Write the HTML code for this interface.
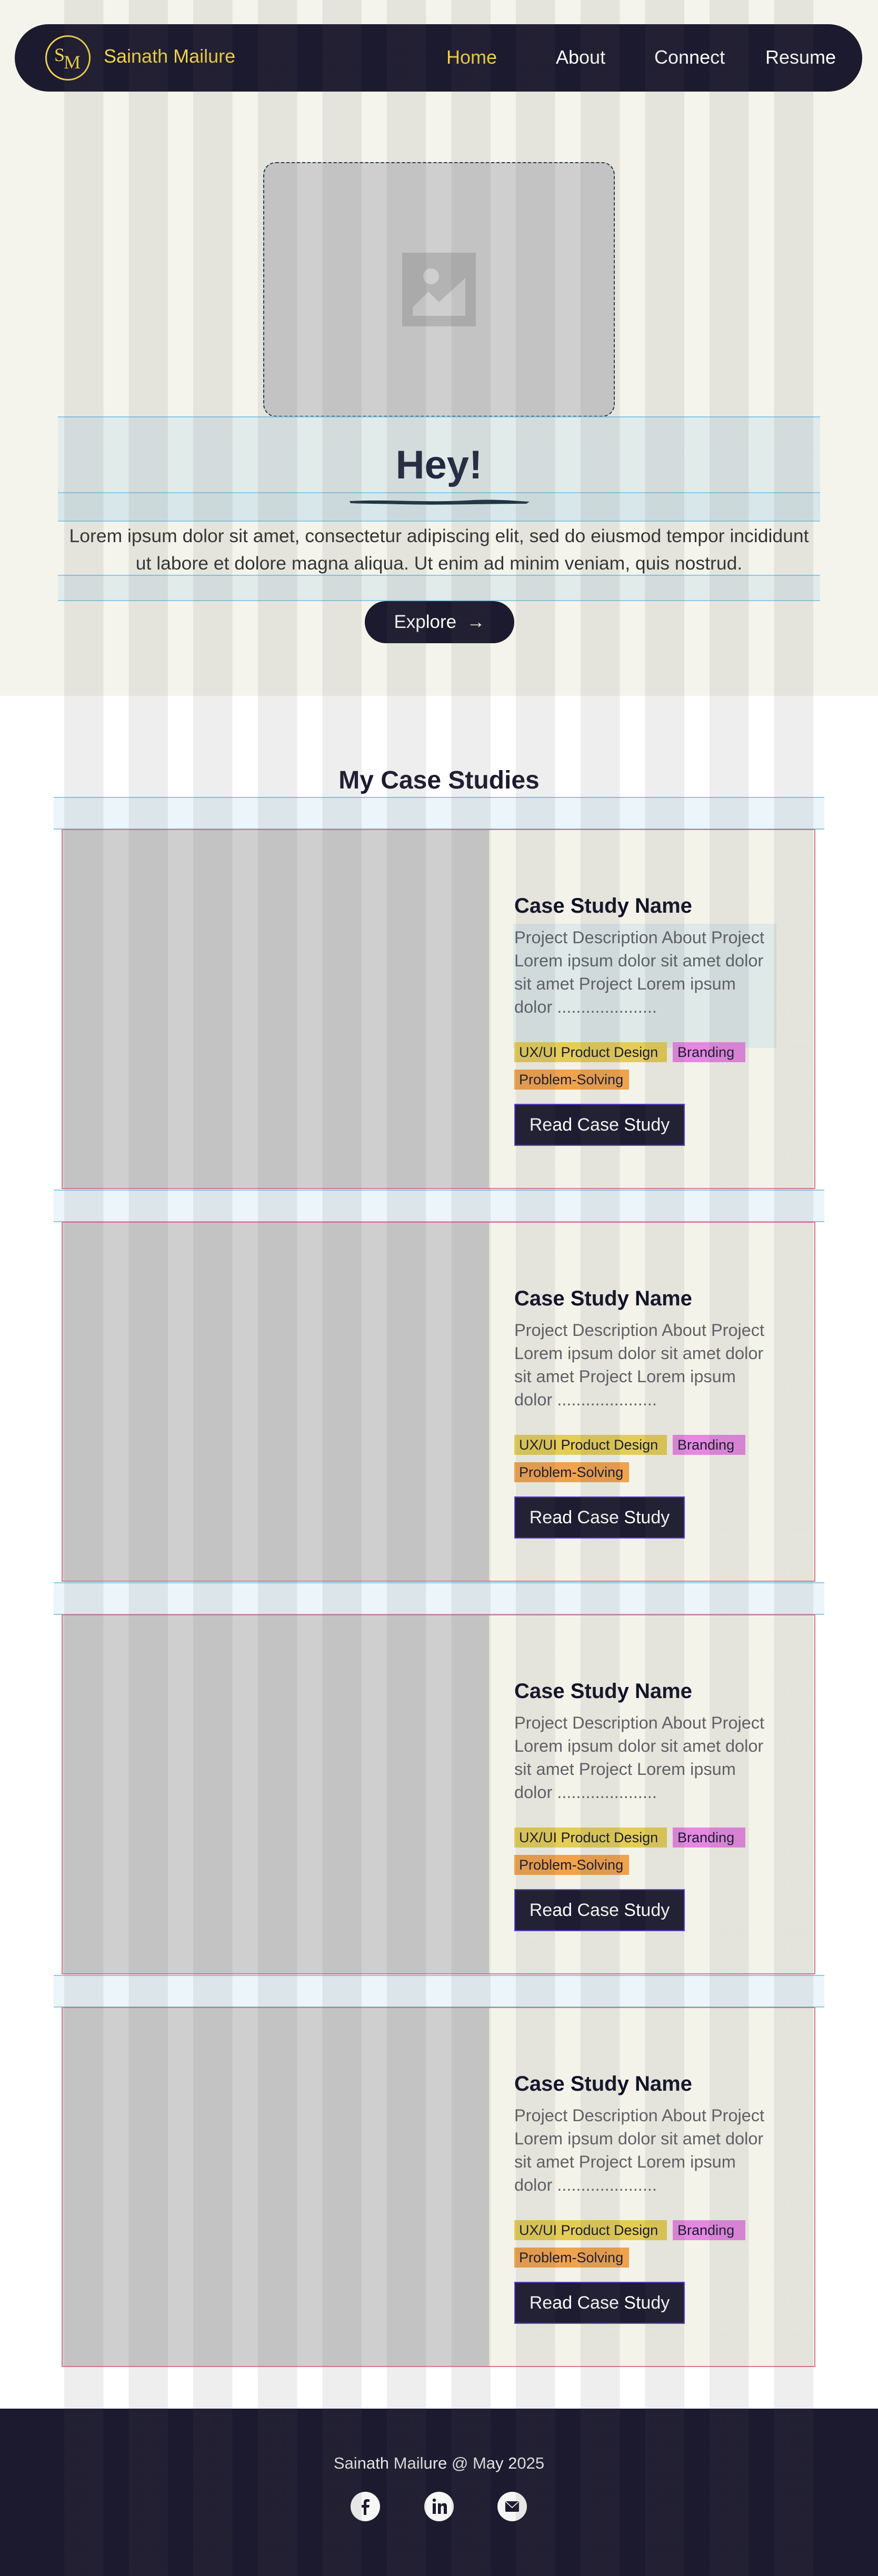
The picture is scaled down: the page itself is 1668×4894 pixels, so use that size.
<!DOCTYPE html>
<html><head><meta charset="utf-8">
<style>
*{margin:0;padding:0;box-sizing:border-box}
html,body{width:1668px;height:4894px;overflow:hidden}
body{position:relative;background:#fff;font-family:"Liberation Sans",sans-serif}
.abs{position:absolute}
#grid{position:absolute;left:0;top:0;width:1668px;height:4894px;pointer-events:none;z-index:50;
background-image:repeating-linear-gradient(90deg,rgba(90,90,90,0.1) 0 74.5px,transparent 74.5px 122.6px);
background-position:122px 0;background-size:1424px 100%;background-repeat:no-repeat;}
.hero{left:0;top:0;width:1668px;height:1322px;background:#f4f4ec}
.nav{left:28px;top:46px;width:1610px;height:128px;border-radius:64px;background:#1b1a2e}
.navl{color:#fff;font-size:36px;top:88px}
.band{background:rgba(130,190,225,0.16);border-top:2px solid #8ec8e6;border-bottom:2px solid #8ec8e6}
.card{left:117px;width:1432px;height:684px;background:#f3f3ea;border:2px solid #e2758f}
.card .img{position:absolute;left:0;top:0;width:810px;height:100%;background:#cfcfcf}
.title{position:absolute;left:858px;top:122px;font-size:40px;font-weight:bold;color:#111027;white-space:nowrap}
.desc{position:absolute;left:858px;top:182px;font-size:32.5px;line-height:44px;color:#5f6268;white-space:nowrap}
.tag{position:absolute;height:38px;font-size:27px;line-height:38px;color:#1a1a30;padding-left:9px;white-space:nowrap;overflow:hidden}
.btn{position:absolute;left:858px;width:324px;height:80px;background:#1d1c30;border:2px solid #5b3fe0;color:#fff;font-size:34px;line-height:76px;text-align:center}
</style></head><body>
<div class="abs hero"></div>
<div class="abs nav"></div>
<svg class="abs" style="left:85px;top:66px;z-index:2" width="88" height="88" viewBox="0 0 88 88">
<circle cx="44" cy="44" r="41.5" fill="none" stroke="#f2d24a" stroke-width="3"/>
<text x="18" y="50" font-family="Liberation Serif,serif" font-size="36" fill="#f2d24a">S</text>
<text x="36" y="64" font-family="Liberation Serif,serif" font-size="36" fill="#f2d24a">M</text>
</svg>
<div class="abs" style="left:197px;top:86px;font-size:36px;color:#f2d24a;font-weight:500">Sainath Mailure</div>
<div class="abs navl" style="left:848px;color:#f2d24a;font-weight:500">Home</div>
<div class="abs navl" style="left:1056px">About</div>
<div class="abs navl" style="left:1243px">Connect</div>
<div class="abs navl" style="left:1454px">Resume</div>

<div class="abs" style="left:500px;top:308px;width:668px;height:484px;background:#cfcfcf;border:2px dashed #1f3a55;border-radius:24px"></div>
<div class="abs" style="left:764px;top:480px;width:140px;height:140px;background:#b3b3b3"></div>
<svg class="abs" style="left:764px;top:480px" width="140" height="140" viewBox="0 0 140 140">
<circle cx="55" cy="45" r="15" fill="#cfcfcf"/>
<path d="M20 120 L20 104 L50 74 L70 94 L120 48 L120 120 Z" fill="#cfcfcf"/>
</svg>

<div class="abs band" style="left:110px;top:791px;width:1448px;height:146px"></div>
<div class="abs band" style="left:110px;top:935px;width:1448px;height:56px;background:rgba(130,190,225,0.25)"></div>
<div class="abs" style="left:0;top:840px;width:1668px;text-align:center;font-size:76px;font-weight:bold;color:#222a40">Hey!</div>
<svg class="abs" style="left:660px;top:942px" width="350" height="22"><path d="M4 10 C80 6 160 14 240 8 C290 6 320 10 346 11 L340 15 C260 15 180 18 100 16 C60 15 30 15 6 14Z" fill="#1f3444"/></svg>
<div class="abs" style="left:0;top:992px;width:1668px;text-align:center;font-size:35.5px;line-height:52px;color:#333">Lorem ipsum dolor sit amet, consectetur adipiscing elit, sed do eiusmod tempor incididunt<br>ut labore et dolore magna aliqua. Ut enim ad minim veniam, quis nostrud.</div>
<div class="abs band" style="left:110px;top:1092px;width:1448px;height:50px"></div>
<div class="abs" style="left:693px;top:1142px;width:284px;height:80px;border-radius:40px;background:#1b1a2e;color:#fff;font-size:35px;line-height:80px;text-align:center">Explore &nbsp;→</div>

<div class="abs" style="left:0;top:1455px;width:1668px;text-align:center;font-size:48px;font-weight:bold;color:#1b1a2e">My Case Studies</div>

<div class="abs band" style="left:102px;top:1514px;width:1464px;height:62px"></div>
<div class="abs card" style="top:1575px"><div class="img"></div>
<div class="abs" style="left:856px;top:178px;width:500px;height:236px;background:rgba(130,190,225,0.18)"></div>
<div class="title">Case Study Name</div>
<div class="desc">Project Description About Project<br>Lorem ipsum dolor sit amet dolor<br>sit amet Project Lorem ipsum<br>dolor .....................</div>
<div class="tag" style="left:858px;top:403px;width:290px;background:#e4cd55">UX/UI Product Design</div>
<div class="tag" style="left:1159px;top:403px;width:138px;background:#e687e2">Branding</div>
<div class="tag" style="left:858px;top:455px;width:218px;background:#f0a24c">Problem-Solving</div>
<div class="btn" style="top:520px">Read Case Study</div></div>

<div class="abs band" style="left:102px;top:2260px;width:1464px;height:62px"></div>
<div class="abs card" style="top:2321px"><div class="img"></div>
<div class="title">Case Study Name</div>
<div class="desc">Project Description About Project<br>Lorem ipsum dolor sit amet dolor<br>sit amet Project Lorem ipsum<br>dolor .....................</div>
<div class="tag" style="left:858px;top:403px;width:290px;background:#e4cd55">UX/UI Product Design</div>
<div class="tag" style="left:1159px;top:403px;width:138px;background:#e687e2">Branding</div>
<div class="tag" style="left:858px;top:455px;width:218px;background:#f0a24c">Problem-Solving</div>
<div class="btn" style="top:520px">Read Case Study</div></div>

<div class="abs band" style="left:102px;top:3006px;width:1464px;height:62px"></div>
<div class="abs card" style="top:3067px"><div class="img"></div>
<div class="title">Case Study Name</div>
<div class="desc">Project Description About Project<br>Lorem ipsum dolor sit amet dolor<br>sit amet Project Lorem ipsum<br>dolor .....................</div>
<div class="tag" style="left:858px;top:403px;width:290px;background:#e4cd55">UX/UI Product Design</div>
<div class="tag" style="left:1159px;top:403px;width:138px;background:#e687e2">Branding</div>
<div class="tag" style="left:858px;top:455px;width:218px;background:#f0a24c">Problem-Solving</div>
<div class="btn" style="top:520px">Read Case Study</div></div>

<div class="abs band" style="left:102px;top:3752px;width:1464px;height:62px"></div>
<div class="abs card" style="top:3813px"><div class="img"></div>
<div class="title">Case Study Name</div>
<div class="desc">Project Description About Project<br>Lorem ipsum dolor sit amet dolor<br>sit amet Project Lorem ipsum<br>dolor .....................</div>
<div class="tag" style="left:858px;top:403px;width:290px;background:#e4cd55">UX/UI Product Design</div>
<div class="tag" style="left:1159px;top:403px;width:138px;background:#e687e2">Branding</div>
<div class="tag" style="left:858px;top:455px;width:218px;background:#f0a24c">Problem-Solving</div>
<div class="btn" style="top:520px">Read Case Study</div></div>

<div class="abs" style="left:0;top:4576px;width:1668px;height:318px;background:#1b1a2e"></div>
<div class="abs" style="left:0;top:4662px;width:1668px;text-align:center;font-size:31px;color:#e6e6e6">Sainath Mailure @ May 2025</div>
<svg class="abs" style="left:666px;top:4734px" width="56" height="56" viewBox="0 0 56 56"><circle cx="28" cy="28" r="28" fill="#f6f6f6"/><path d="M30 44 V30 H35 L36 25 H30 V21 C30 19.5 31 19 32.5 19 H36 V14.5 C34.5 14.3 33 14 31 14 C27 14 25 16.5 25 20.5 V25 H21 V30 H25 V44 Z" fill="#1b1a2e"/></svg>
<svg class="abs" style="left:806px;top:4734px" width="56" height="56" viewBox="0 0 56 56"><circle cx="28" cy="28" r="28" fill="#f6f6f6"/><circle cx="19" cy="16" r="3.2" fill="#1b1a2e"/><rect x="16" y="22" width="6" height="20" fill="#1b1a2e"/><path d="M26 22 H31.5 V25 C33 22.8 35 21.6 38 21.6 C42 21.6 43 24.5 43 28.5 V42 H37 V30 C37 27.5 36 26.5 34.5 26.5 C32.5 26.5 31.5 28 31.5 30.5 V42 H26 Z" fill="#1b1a2e"/></svg>
<svg class="abs" style="left:945px;top:4734px" width="56" height="56" viewBox="0 0 56 56"><circle cx="28" cy="28" r="28" fill="#f6f6f6"/><rect x="15" y="18" width="26" height="20" rx="2" fill="#1b1a2e"/><path d="M16 19 L28 30 L40 19" fill="none" stroke="#f6f6f6" stroke-width="1.6"/></svg>

<div id="grid"></div>
</body></html>
